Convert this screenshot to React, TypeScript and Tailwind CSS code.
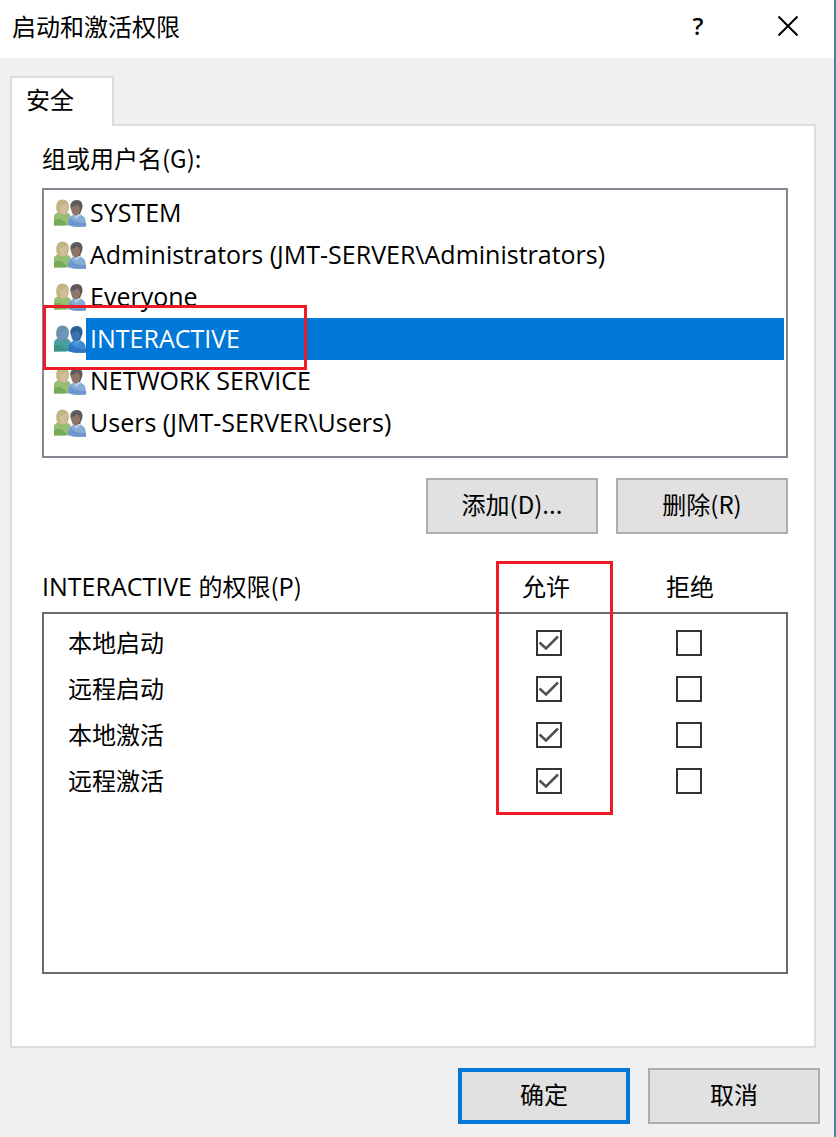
import { useState } from "react";

const LATIN = "font-['Open_Sans','Noto_Sans_CJK_SC',sans-serif] text-[25px]";

const principals = [
  { id: "SYSTEM", label: "SYSTEM" },
  { id: "Administrators", label: "Administrators (JMT-SERVER\\Administrators)" },
  { id: "Everyone", label: "Everyone" },
  { id: "INTERACTIVE", label: "INTERACTIVE" },
  { id: "NETWORK SERVICE", label: "NETWORK SERVICE" },
  { id: "Users", label: "Users (JMT-SERVER\\Users)" },
];

const permissions = ["本地启动", "远程启动", "本地激活", "远程激活"];

const normalColors = {
  hair: "#c2b583",
  face: "#d2bd9a",
  body: "#97bd70",
  bodyDark: "#74ab55",
  darkHair: "#5c5a5c",
  darkFace: "#8f7468",
  shirt: "#86acd8",
  shirtDark: "#6c98cc",
  collar: "#b9cfe6",
};

const selectedColors = {
  hair: "#6a93a8",
  face: "#6b96bd",
  body: "#4a9f9c",
  bodyDark: "#3c9488",
  darkHair: "#2a5f92",
  darkFace: "#3a74ac",
  shirt: "#3f8ad2",
  shirtDark: "#2f76c0",
  collar: "#5f9fd8",
};

function UsersIcon({ selected }: { selected: boolean }) {
  const c = selected ? selectedColors : normalColors;
  return (
    <svg viewBox="0 0 32 28" className="h-7 w-8 shrink-0" aria-hidden="true">
      <path d="M0 26.500V18c0-3 2-4 5-5h7c3 1 5 3 5 6v7z" fill={c.body} />
      <path d="M0 26.500V21c4-2 9-1 13 5.500z" fill={c.bodyDark} />
      <path d="M3 13C0.500 5 4 0.500 8.500 0.500S16 4 14.500 11l-2 4H5z" fill={c.hair} />
      <path d="M6 7c2 0 5-1 6-3 2 2 2 4 1 7s-2 4.500-4 4.500S6 12 6 7z" fill={c.face} />
      <path d="M14 26c-1-5 1-8 5-10h8c4 1.500 5 4 5 11.500-6 0.500-13 0.500-18-1.500z" fill={c.shirt} />
      <path d="M14 26c0-3 1-5 3-7 2 3 6 5 15 5v3.500c-6 0.500-13 0.500-18-1.500z" fill={c.shirtDark} />
      <path d="M19 15l3 5 5-4-1-2h-6z" fill={c.collar} />
      <path d="M16.500 9c-1-5 2-8 6.500-8s6.500 4 5 9l-2 5h-6z" fill={c.darkHair} />
      <path d="M17 8c2 0 5-1 6-3 2 2 4 4 3 7s-3 5-5 4.500-4-3.500-4-8.500z" fill={c.darkFace} />
    </svg>
  );
}

function Check({ label, initial }: { label: string; initial: boolean }) {
  const [checked, setChecked] = useState(initial);
  return (
    <span className="grid size-[26px] place-items-center">
      <input
        type="checkbox"
        aria-label={label}
        checked={checked}
        onChange={(e) => setChecked(e.target.checked)}
        className="col-start-1 row-start-1 size-[26px] appearance-none border-2 border-[#333] bg-white"
      />
      {checked && (
        <svg viewBox="0 0 26 26" className="pointer-events-none col-start-1 row-start-1 size-[26px]" aria-hidden="true">
          <path d="M3.500 12.500l6.500 6L22 6.500" fill="none" stroke="#505050" strokeWidth="2.500" />
        </svg>
      )}
    </span>
  );
}

function PushButton({ children, primary = false }: { children: string; primary?: boolean }) {
  return (
    <button
      type="button"
      className={`h-14 w-[172px] bg-[#e1e1e1] pb-1 ${primary ? "border-4 border-[#0078d7]" : "border-2 border-[#adadad]"}`}
    >
      {children}
    </button>
  );
}

export default function App() {
  const [selected, setSelected] = useState("INTERACTIVE");

  return (
    <div className="flex min-h-screen flex-col border-r-2 border-[#4a7ea3] bg-[#f0f0f0] font-['Noto_Sans_CJK_SC',sans-serif] text-2xl text-black">
      <header className="flex h-[58px] items-center bg-white pr-px pb-1.5 pl-3">
        <h1 className="flex-1">启动和激活权限</h1>
        <button type="button" aria-label="帮助" className="w-[90px] text-center font-['Open_Sans',sans-serif] font-semibold">
          ?
        </button>
        <button type="button" aria-label="关闭" className="flex w-[90px] justify-center">
          <svg viewBox="0 0 20 20" className="size-5" aria-hidden="true">
            <path d="M0.500 0.500l19 19M19.500 0.500l-19 19" stroke="#000" strokeWidth="2" />
          </svg>
        </button>
      </header>

      <main className="flex flex-1 flex-col pt-[18px] pr-[18px] pl-[10px]">
        <div role="tablist" className="relative z-10 -mb-0.5 flex">
          <button
            type="button"
            role="tab"
            aria-selected="true"
            className="h-[50px] w-[104px] border-2 border-b-0 border-[#dcdcdc] bg-white pb-1.5 pl-3.5 text-left"
          >
            安全
          </button>
        </div>

        <section className="flex flex-1 flex-col border-2 border-[#dcdcdc] bg-white pt-3 pr-[26px] pb-[72px] pl-[30px]">
          <h2 id="principals" className="mb-2.5 leading-10">
            组或用户名(G):
          </h2>
          <ul role="listbox" aria-labelledby="principals" className={`min-h-[270px] border-2 border-[#828790] p-0.5 ${LATIN}`}>
            {principals.map((p) => {
              const on = p.id === selected;
              return (
                <li key={p.id} role="option" aria-selected={on} className="relative">
                  <button
                    type="button"
                    onClick={() => setSelected(p.id)}
                    className="flex h-[42px] w-full items-center pl-2 text-left"
                  >
                    <UsersIcon selected={on} />
                    <span className={`flex-1 pb-0.5 pl-1 leading-10 ${on ? "bg-[#0078d7] text-white" : ""}`}>{p.label}</span>
                  </button>
                  {p.id === "INTERACTIVE" && (
                    <span className="pointer-events-none absolute -top-[13px] -left-[3px] z-10 h-[65px] w-[264px] border-3 border-[#ed1c24]" />
                  )}
                </li>
              );
            })}
          </ul>

          <div className="mt-5 flex justify-end gap-[18px]">
            <PushButton>添加(D)...</PushButton>
            <PushButton>删除(R)</PushButton>
          </div>

          <table className="mt-7 flex flex-1 flex-col">
            <thead className="block">
              <tr className="flex h-[50px] items-center pr-[26px] pb-0.5">
                <th scope="col" className="flex-1 text-left leading-9 font-normal">
                  <span className={LATIN}>{selected} </span>的权限(P)
                </th>
                <th scope="col" className="relative w-36 leading-9 font-normal">
                  允许
                  <span className="pointer-events-none absolute -top-[7px] left-[22px] z-10 h-[254px] w-[117px] border-3 border-[#ed1c24]" />
                </th>
                <th scope="col" className="w-36 leading-9 font-normal">
                  拒绝
                </th>
              </tr>
            </thead>
            <tbody className="block min-h-[200px] flex-1 border-2 border-[#696969] pt-1.5">
              {permissions.map((name) => (
                <tr key={name} className="flex h-[46px] items-center pr-[27px] pl-6">
                  <th scope="row" className="flex-1 pb-0.5 text-left font-normal">
                    {name}
                  </th>
                  <td className="flex w-[140px] justify-center">
                    <Check label={`${name} 允许`} initial={true} />
                  </td>
                  <td className="flex w-[140px] justify-center">
                    <Check label={`${name} 拒绝`} initial={false} />
                  </td>
                </tr>
              ))}
            </tbody>
          </table>
        </section>
      </main>

      <footer className="flex justify-end gap-[18px] pt-5 pr-3.5 pb-[13px]">
        <PushButton primary>确定</PushButton>
        <PushButton>取消</PushButton>
      </footer>
    </div>
  );
}
